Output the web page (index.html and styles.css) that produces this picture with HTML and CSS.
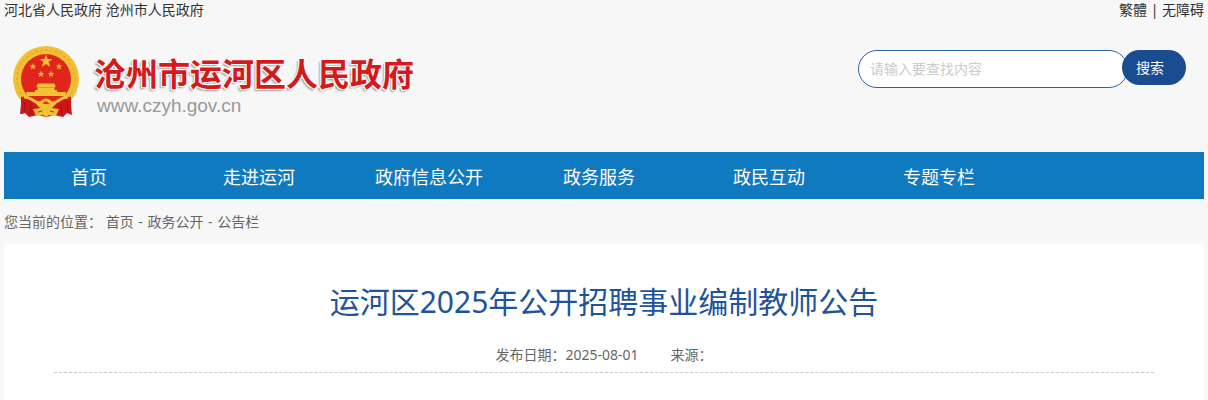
FILE: index.html
```html
<!DOCTYPE html>
<html lang="zh-CN">
<head>
  <meta charset="UTF-8" />
  <meta name="viewport" content="width=device-width, initial-scale=1" />
  <title>运河区2025年公开招聘事业编制教师公告</title>
  <link rel="stylesheet" href="styles.css">
</head>
<body>
  <div class="wrap">

    <div class="top-bar">
      <div>
        <a href="#">河北省人民政府</a>
        <a href="#">沧州市人民政府</a>
      </div>
      <div>
        <a href="#">繁體</a> | <a href="#">无障碍</a>
      </div>
    </div>

    <header class="header">
      <a class="logo" href="#">
        <svg class="emblem" viewBox="0 0 66 72" width="66" height="72" aria-hidden="true">
          <!-- ribbon -->
          <path d="M9 48 L7 68 L12 67 L16 71 L25 69 L33 71 L41 69 L50 71 L54 67 L59 69 L57 48 Z" fill="#c8161a" />
          <!-- gold ring -->
          <circle cx="33" cy="33" r="33" fill="#f3bf35" />
          <circle cx="33" cy="33" r="29" fill="none" stroke="#eab02b" stroke-width="2" stroke-dasharray="3 2" />
          <circle cx="33" cy="33" r="25" fill="#e0251b" />
          <g fill="#f5c237">
            <path id="star" d="M33 8 L34.6 13 L39.6 13 L35.6 16 L37.2 21 L33 18 L28.8 21 L30.4 16 L26.4 13 L31.4 13 Z" />
            <use href="#star" transform="translate(3.5 13) scale(.5)" />
            <use href="#star" transform="translate(29.5 13) scale(.5)" />
            <use href="#star" transform="translate(11.5 20.5) scale(.5)" />
            <use href="#star" transform="translate(21.5 20.5) scale(.5)" />
            <!-- gate tower -->
            <path d="M25 37.5 H41 L43 40.5 H41.5 V44 H44 V46 H53 L52 50 H14 L13 46 H22 V44 H24.5 V40.5 H23 Z" />
          </g>
          <path d="M24 41.5 H42" stroke="#df9a25" stroke-width="1" />
          <!-- drapes and cog wheel -->
          <path d="M8 51 C15 50 20 53 23 58 L27 62 L20 69 L15 66 L8 68 Z" fill="#cf171b" />
          <path d="M58 51 C51 50 46 53 43 58 L39 62 L46 69 L51 66 L58 68 Z" fill="#cf171b" />
          <path d="M12 56 L11 66 M18 59 L17 68 M48 59 L49 68 M54 56 L55 66" stroke="#a01215" stroke-width="1" />
          <path d="M11 51 C19 51 22 58 28 57 C31 53 35 53 38 57 C44 58 47 51 55 51" fill="none" stroke="#f3bf35" stroke-width="3" />
          <path d="M20 63 L28 62 L33 58 L38 62 L46 63 L43 70 L36 69 L33 71 L30 69 L23 70 Z" fill="#f3bf35" />
          <path d="M25 66 L29 65 M37 65 L41 66" stroke="#cf171b" stroke-width="1" />
        </svg>
        <span class="logo-text">
          <span class="logo-name">沧州市运河区人民政府</span>
          <span class="logo-url">www.czyh.gov.cn</span>
        </span>
      </a>

      <form class="search">
        <input class="search-input" type="text" placeholder="请输入要查找内容" aria-label="搜索内容" />
        <button class="search-btn" type="submit">搜索</button>
      </form>
    </header>

    <nav class="nav">
      <a href="#">首页</a>
      <a href="#">走进运河</a>
      <a href="#">政府信息公开</a>
      <a href="#">政务服务</a>
      <a href="#">政民互动</a>
      <a href="#">专题专栏</a>
    </nav>

    <div class="crumbs">
      您当前的位置：
      <a href="#">首页</a> <span>-</span> <a href="#">政务公开</a> <span>-</span> <a href="#">公告栏</a>
    </div>

    <main class="article">
      <h1 class="article-title">运河区2025年公开招聘事业编制教师公告</h1>
      <div class="article-info">
        <span>发布日期：2025-08-01</span>
        <span>来源：</span>
      </div>
    </main>

  </div>
</body>
</html>
```
FILE: styles.css
```css
* {
  box-sizing: border-box;
  margin: 0;
  padding: 0;
}
body {
  font-family: "Noto Sans", "Noto Sans CJK SC", sans-serif;
  font-size: 14px;
  line-height: 20px;
  color: #333;
  background: #f7f7f7;
}
a {
  color: inherit;
  text-decoration: none;
}
.wrap {
  display: flex;
  flex-direction: column;
  max-width: 1200px;
  min-height: 100vh;
  margin: 0 auto;
}

/* Top links */
.top-bar {
  display: flex;
  justify-content: space-between;
}

/* Header */
.header {
  display: flex;
  justify-content: space-between;
  align-items: flex-start;
  padding: 26px 18px 34px 9px;
}
.logo {
  display: flex;
  gap: 15px;
}
.logo-text {
  display: flex;
  flex-direction: column;
  padding-top: 8px;
}
.logo-name {
  font-size: 32px;
  line-height: 40px;
  font-weight: 700;
  color: #d41a1c;
  text-shadow: 1px 0 #fff, -1px 0 #fff, 0 1px #fff, 0 -1px #fff, 1px 1px #fff, -1px 1px #fff, -2px 2px 2px #999;
}
.logo-url {
  padding-left: 3px;
  font-family: "Liberation Sans", Arial, sans-serif;
  font-size: 19px;
  line-height: 24px;
  color: #999;
}

/* Search */
.search {
  display: flex;
  align-items: flex-start;
  padding-top: 4px;
}
.search-input {
  width: 270px;
  height: 38px;
  padding: 0 11px 2px;
  border: 1px solid #2a63a8;
  border-radius: 19px;
  background: #fff;
  font: inherit;
}
.search-input::placeholder {
  color: #ccc;
}
.search-btn {
  width: 64px;
  height: 35px;
  margin-left: -6px;
  padding-right: 8px;
  border: none;
  border-radius: 18px;
  background: #1a4c92;
  color: #fff;
  font: inherit;
  cursor: pointer;
}

/* Nav */
.nav {
  display: flex;
  background: #107ac1;
}
.nav a {
  flex: 0 1 170px;
  padding: 12px 0 9px;
  font-size: 18px;
  line-height: 26px;
  text-align: center;
  color: #fff;
}

/* Breadcrumb */
.crumbs {
  padding: 13px 0 12px;
  color: #666;
}
.crumbs span {
  margin: 0 1px;
}

/* Article */
.article {
  flex: 1;
  padding: 36px 50px;
  background: #fff;
}
.article-title {
  font-size: 30px;
  line-height: 44px;
  font-weight: 400;
  text-align: center;
  color: #1f539b;
}
.article-info {
  display: flex;
  justify-content: center;
  gap: 32px;
  padding: 21px 0 7px;
  border-bottom: 1px dashed #ccc;
  color: #666;
}
```
